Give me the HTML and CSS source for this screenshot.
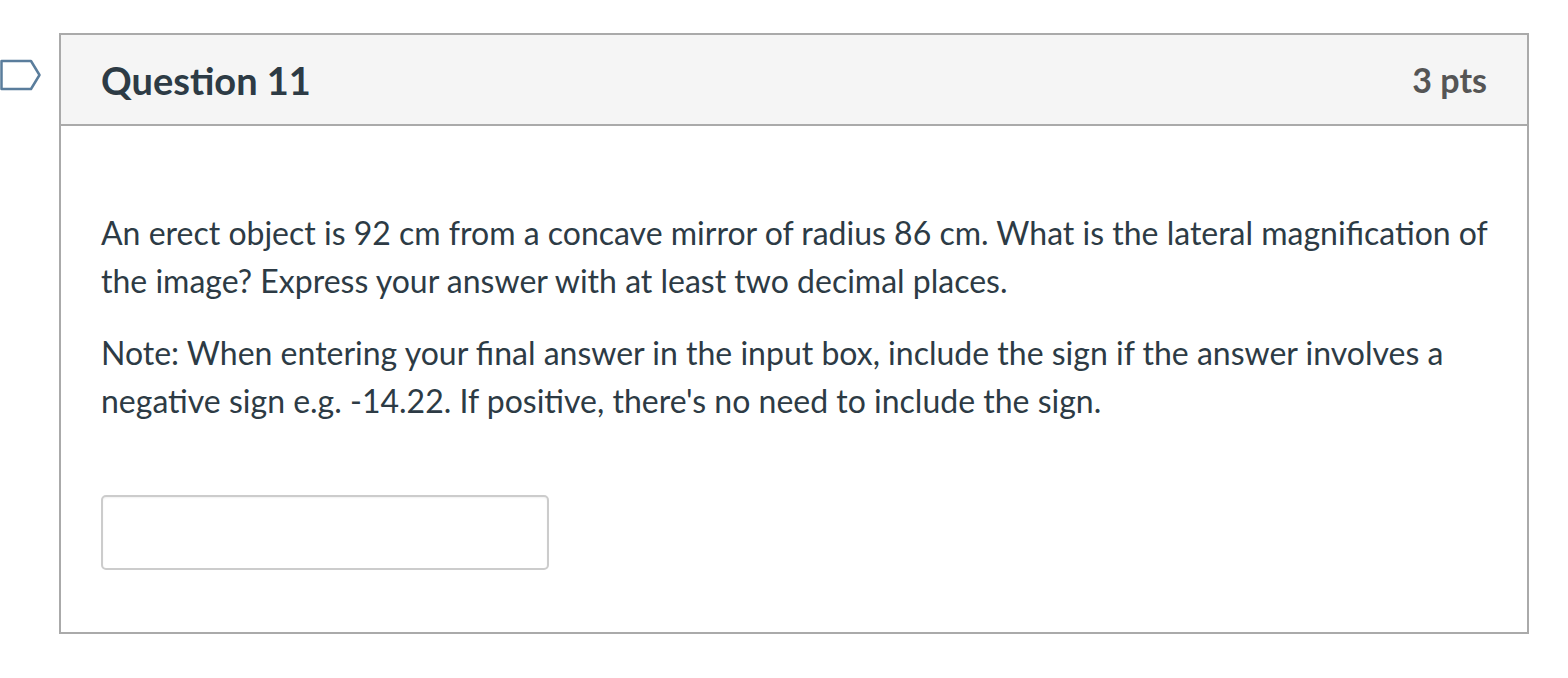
FILE: index.html
```html
<!DOCTYPE html>
<html>
<head>
<meta charset="utf-8">
<link rel="stylesheet" href="styles.css">
</head>
<body>
<div class="page">
  <svg class="flag" width="44" height="34" viewBox="0 0 44 34">
    <path d="M1.5 3 H31 L39.5 17 L31 31 H1.5 Z" fill="#fff" stroke="#5a7d9c" stroke-width="2.5" stroke-linejoin="round"/>
  </svg>
  <div class="question">
    <div class="header">
      <h2 class="title">Question 11</h2>
      <div class="pts">3 pts</div>
    </div>
    <div class="body">
      <p>An erect object is 92 cm from a concave mirror of radius 86 cm. What is the lateral magnification of the image? Express your answer with at least two decimal places.</p>
      <p>Note: When entering your final answer in the input box, include the sign if the answer involves a negative sign e.g. -14.22. If positive, there's no need to include the sign.</p>
      <input class="answer" type="text">
    </div>
  </div>
</div>
</body>
</html>
```

FILE: styles.css
```css
html, body {
  margin: 0;
  padding: 0;
  background: #fff;
}
body {
  font-family: Lato, "Open Sans", sans-serif;
  color: #2d3b45;
}
.page {
  position: relative;
  padding: 33px 0 0 59px;
}
.flag {
  position: absolute;
  left: 0;
  top: 58px;
}
.question {
  width: 1466px;
  border: 2px solid #aaaaaa;
}
.header {
  display: flex;
  align-items: center;
  justify-content: space-between;
  height: 89px;
  padding: 0 40px;
  background: #f5f5f5;
  border-bottom: 2px solid #aaaaaa;
}
.title {
  margin: 0;
  font-size: 38px;
  font-weight: 700;
  color: #2d3b45;
}
.pts {
  font-size: 34px;
  font-weight: 700;
  color: #555555;
}
.body {
  padding: 83px 30px 62px 40px;
}
.body p {
  margin: 0 0 24px 0;
  font-size: 32px;
  line-height: 48px;
}
.answer {
  display: block;
  margin-top: 70px;
  width: 448px;
  height: 75px;
  box-sizing: border-box;
  border: 2px solid #cccccc;
  border-radius: 5px;
  box-shadow: inset 0 1px 2px rgba(0,0,0,0.06);
  background: #fff;
  padding: 0;
}
```
